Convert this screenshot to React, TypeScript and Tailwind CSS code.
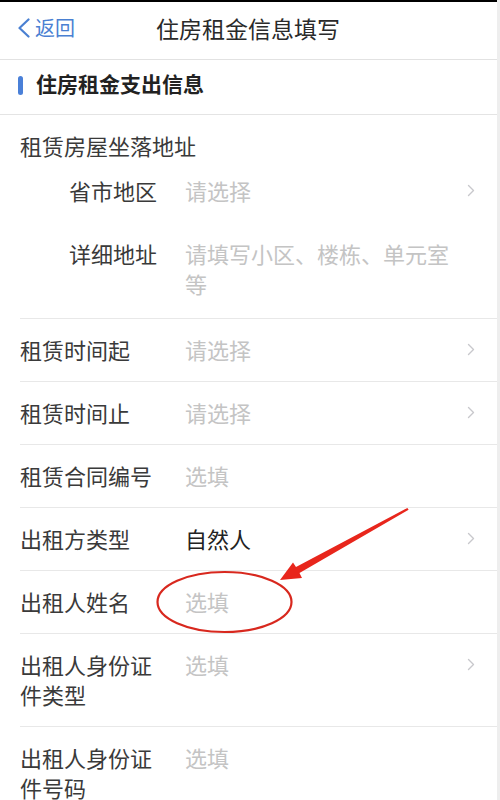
import React from "react";

const font = { fontFamily: '"Noto Sans CJK SC", "Noto Sans", sans-serif' };

function Chevron() {
  return (
    <svg width="8" height="13" viewBox="0 0 8 13" className="shrink-0">
      <path d="M1.5 1.5 L6.5 6.5 L1.5 11.5" fill="none" stroke="#c8c8cc" strokeWidth="1.4" strokeLinecap="round" strokeLinejoin="round" />
    </svg>
  );
}

function Row({ label, value, filled, chevron }: { label: string; value: string; filled?: boolean; chevron?: boolean }) {
  return (
    <div className="ml-5 flex items-start border-b border-[#e8e8e8] pt-[15px] pb-[17px] pr-[25px]">
      <div className="w-[140px] mr-[25px] shrink-0 text-[22px] leading-[30px] text-[#3a3a3a]">{label}</div>
      <div className={`flex-1 text-[22px] leading-[30px] ${filled ? "text-[#222]" : "text-[#c4c4c4]"}`}>{value}</div>
      {chevron ? (
        <div className="h-[30px] flex items-center">
          <Chevron />
        </div>
      ) : null}
    </div>
  );
}

export default function App() {
  return (
    <div className="relative w-[500px] h-[800px] overflow-hidden bg-white" style={font}>
      <div className="h-[2px] bg-black" />
      <div className="relative h-[58px] flex items-center justify-center border-b border-[#e2e2e2] pb-[5px]">
        <div className="absolute left-[17px] top-0 h-full flex items-center text-[#4a80d2] pb-[5px]">
          <svg width="14" height="20" viewBox="0 0 14 20" className="mr-[4px]">
            <path d="M11.5 1.5 L2.5 10 L11.5 18.5" fill="none" stroke="#4a80d2" strokeWidth="2.2" strokeLinecap="round" strokeLinejoin="round" />
          </svg>
          <span className="text-[20px] leading-none">返回</span>
        </div>
        <span className="text-[23px] leading-none text-[#2a2a2a] -ml-[4px]">住房租金信息填写</span>
      </div>
      <div className="h-[55px] flex items-center border-b border-[#e4e4e4] pl-[18px] pb-[8px]">
        <div className="w-[5px] h-[19px] rounded-full bg-[#4a80d8] mr-[13px] mt-[4px]" />
        <span className="text-[21px] font-bold text-[#222] leading-none">住房租金支出信息</span>
      </div>
      <div className="ml-5 border-b border-[#e8e8e8] pt-[15px] pb-[20px] pr-[25px]">
        <div className="text-[22px] leading-[30px] text-[#3a3a3a]">租赁房屋坐落地址</div>
        <div className="mt-[15px] flex items-start pl-[49px]">
          <div className="w-[116px] shrink-0 text-[22px] leading-[30px] text-[#3a3a3a]">省市地区</div>
          <div className="flex-1 text-[22px] leading-[30px] text-[#c4c4c4]">请选择</div>
          <div className="h-[30px] flex items-center">
            <Chevron />
          </div>
        </div>
        <div className="mt-[33px] flex items-start pl-[49px]">
          <div className="w-[116px] shrink-0 text-[22px] leading-[30px] text-[#3a3a3a]">详细地址</div>
          <div className="w-[272px] text-[22px] leading-[30px] text-[#c4c4c4]">请填写小区、楼栋、单元室等</div>
        </div>
      </div>
      <Row label="租赁时间起" value="请选择" chevron />
      <Row label="租赁时间止" value="请选择" chevron />
      <Row label="租赁合同编号" value="选填" />
      <Row label="出租方类型" value="自然人" filled chevron />
      <Row label="出租人姓名" value="选填" />
      <Row label="出租人身份证件类型" value="选填" chevron />
      <Row label="出租人身份证件号码" value="选填" />
      <div className="absolute right-0 top-0 h-full w-[3px] bg-[#eeeeee]" />
      <svg className="absolute left-0 top-0 pointer-events-none" width="500" height="800" viewBox="0 0 500 800">
        <ellipse cx="224.5" cy="602" rx="67" ry="30" fill="none" stroke="#d8281e" strokeWidth="2.2" />
        <polygon points="408.6,509.8 407.4,507.9 296,567 293,562.5 280,580 302,578 299.5,573" fill="#e8261c" />
      </svg>
    </div>
  );
}
